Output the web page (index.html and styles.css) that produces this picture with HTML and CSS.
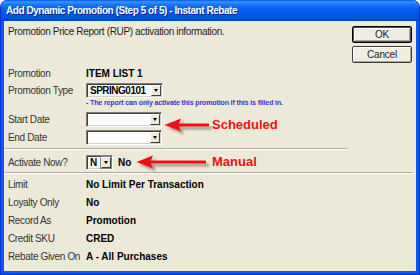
FILE: index.html
```html
<!DOCTYPE html>
<html lang="en">
  <head>
    <meta charset="UTF-8" />
    <title>Add Dynamic Promotion (Step 5 of 5) - Instant Rebate</title>
    <link rel="stylesheet" href="styles.css">
  </head>
  <body>
    <div class="window">
      <div class="titlebar">Add Dynamic Promotion (Step 5 of 5) - Instant Rebate</div>

      <div class="client">
        <!-- Intro + dialog buttons -->
        <div class="top">
          <p class="intro">Promotion Price Report (RUP) activation information.</p>
          <div class="buttons">
            <button class="btn btn-default">OK</button>
            <button class="btn">Cancel</button>
          </div>
        </div>

        <div class="row r-promo">
          <span class="label">Promotion</span>
          <span class="value">ITEM LIST 1</span>
        </div>
        <div class="row r-type">
          <span class="label">Promotion Type</span>
          <div class="combo combo-type">
            <span class="combo-text">SPRING0101</span>
            <span class="drop"></span>
          </div>
        </div>
        <div class="note">- The report can only activate this promotion if this is filled in.</div>

        <div class="row r-start">
          <span class="label">Start Date</span>
          <div class="combo combo-date">
            <span class="combo-text"></span>
            <span class="drop"></span>
          </div>
        </div>
        <div class="row r-end">
          <span class="label">End Date</span>
          <div class="combo combo-date">
            <span class="combo-text"></span>
            <span class="drop"></span>
          </div>
        </div>

        <hr class="sep sep-short">

        <div class="row r-activate">
          <span class="label">Activate Now?</span>
          <div class="combo combo-yn">
            <span class="combo-text">N</span>
            <span class="drop drop-framed"></span>
          </div>
          <span class="value yn-text">No</span>
        </div>

        <hr class="sep sep-full">

        <!-- Read-only summary -->
        <div class="summary">
          <div class="row r-sum"><span class="label">Limit</span><span class="value">No Limit Per Transaction</span></div>
          <div class="row r-sum"><span class="label">Loyalty Only</span><span class="value">No</span></div>
          <div class="row r-sum"><span class="label">Record As</span><span class="value">Promotion</span></div>
          <div class="row r-sum"><span class="label">Credit SKU</span><span class="value">CRED</span></div>
          <div class="row r-sum"><span class="label">Rebate Given On</span><span class="value">A - All Purchases</span></div>
        </div>

        <!-- Annotations -->
        <div class="callout callout-scheduled">
          <svg width="45" height="14" viewBox="0 0 45 14">
            <defs>
              <filter id="arrow-shadow" x="-20%" y="-60%" width="160%" height="260%">
                <feDropShadow dx="3" dy="3" stdDeviation="1.2" flood-color="#6e6a5c" flood-opacity="0.6" />
              </filter>
            </defs>
            <path d="M0.5,7 L17,0.5 L15,5.5 L45,5.5 L45,8.5 L15,8.5 L17,13.5 Z" fill="#f01018" filter="url(#arrow-shadow)" />
          </svg>
          <span>Scheduled</span>
        </div>
        <div class="callout callout-manual">
          <svg width="70" height="14" viewBox="0 0 70 14">
            <path d="M0.5,7 L17,0.5 L15,5.5 L70,5.5 L70,8.5 L15,8.5 L17,13.5 Z" fill="#f01018" filter="url(#arrow-shadow)" />
          </svg>
          <span>Manual</span>
        </div>
      </div>
    </div>
  </body>
</html>
```

FILE: styles.css
```css
body {
  margin: 0;
  background: #fff;
  font-family: "Liberation Sans", Arial, sans-serif;
}

.window {
  width: 420px;
  height: 275px;
  box-sizing: border-box;
  display: flex;
  flex-direction: column;
  background: #0a57e8;
  border: 1px solid #0831d9;
  border-top: none;
  border-radius: 7px 7px 0 0;
  overflow: hidden;
}

.titlebar {
  height: 21px;
  flex: none;
  margin: 0 -1px;
  padding: 1px 0 0 6px;
  box-sizing: border-box;
  line-height: 20px;
  color: #fff;
  font-size: 10px;
  font-weight: bold;
  letter-spacing: -0.45px;
  text-shadow: 1px 1px #0a1e8c;
  background: linear-gradient(
    to bottom,
    #0058ee 0,
    #3d95ff 2px,
    #1e79fd 4px,
    #0863f2 8px,
    #0058e6 14px,
    #0052dc 18px,
    #0042c4 21px
  );
  border-radius: 7px 7px 0 0;
}

.client {
  flex: 1;
  margin: 0 3px 3px;
  padding: 5px 4px 0 4px;
  background: #ece9d8;
  position: relative;
  font-size: 10px;
  color: #222;
  letter-spacing: -0.35px;
}

/* Top block */
.top {
  display: flex;
  justify-content: space-between;
  align-items: flex-start;
}

.intro {
  margin: 0;
  line-height: 12px;
}

.buttons {
  display: flex;
  flex-direction: column;
  gap: 3px;
}

.btn {
  width: 60px;
  height: 17px;
  padding: 0;
  font-family: inherit;
  font-size: 10px;
  letter-spacing: -0.2px;
  color: #222;
  background: #f0eee4;
  border: 1px solid #3c3c3c;
  border-radius: 2px;
  box-shadow: inset 1px 1px #fff, inset -1px -1px #aca899;
}

.btn-default {
  border-color: #000;
  box-shadow: inset 0 0 0 1px #555, inset 2px 2px #fff, inset -2px -2px #aca899;
}

/* Field rows */
.row {
  display: flex;
  align-items: center;
}

.label {
  width: 78px;
  flex: none;
  color: #333;
}

.value {
  font-weight: bold;
  color: #000;
  letter-spacing: 0;
}

.r-promo {
  height: 16px;
  margin-top: 2px;
}

.r-type {
  height: 15px;
  margin-top: 2px;
}

.note {
  margin: 1px 0 0 78px;
  line-height: 8px;
  font-size: 7px;
  font-weight: bold;
  letter-spacing: -0.12px;
  color: #3535c8;
}

.r-start {
  height: 15px;
  margin-top: 5px;
}

.r-end {
  height: 15px;
  margin-top: 3px;
}

.r-activate {
  height: 15px;
  margin-top: 5px;
}

.yn-text {
  margin-left: 5px;
}

.sep {
  height: 0;
  border: 0;
  border-top: 1px solid #aca899;
  border-bottom: 1px solid #fff;
  margin: 3px 0 0 -3px;
}

.sep-short {
  width: 342px;
}

.sep-full {
  width: 408px;
  margin-top: 2px;
}

.summary {
  margin-top: 1px;
}

.r-sum {
  height: 18px;
}

/* Combo boxes */
.combo {
  height: 15px;
  box-sizing: border-box;
  display: flex;
  padding: 1px;
  background: #fff;
  border: 1px solid;
  border-color: #808080 #fff #fff #808080;
  box-shadow: inset 1px 1px #404040, inset -1px -1px #d4d0c8;
}

.combo-type {
  width: 77px;
}

.combo-date {
  width: 76px;
}

.combo-yn {
  width: 27px;
}

.combo-text {
  flex: 1;
  padding-left: 2px;
  line-height: 11px;
  font-weight: bold;
  color: #000;
  letter-spacing: -0.5px;
}

.drop {
  width: 10px;
  flex: none;
  box-sizing: border-box;
  display: flex;
  align-items: center;
  justify-content: center;
  background: #ece9d8;
  border: 1px solid;
  border-color: #fff #404040 #404040 #fff;
}

.drop::after {
  content: "";
  border-left: 2px solid transparent;
  border-right: 2px solid transparent;
  border-top: 3px solid #000;
}

.drop-framed {
  outline: 1px solid #808080;
}

/* Red annotation arrows */
.callout {
  position: absolute;
  display: flex;
  align-items: center;
  color: #f01018;
  font-size: 13px;
  font-weight: bold;
  letter-spacing: 0;
  line-height: 14px;
}

.callout svg {
  flex: none;
  overflow: visible;
}

.callout-scheduled {
  left: 160px;
  top: 97px;
  gap: 3px;
}

.callout-manual {
  left: 132px;
  top: 134px;
  gap: 6px;
}
```
